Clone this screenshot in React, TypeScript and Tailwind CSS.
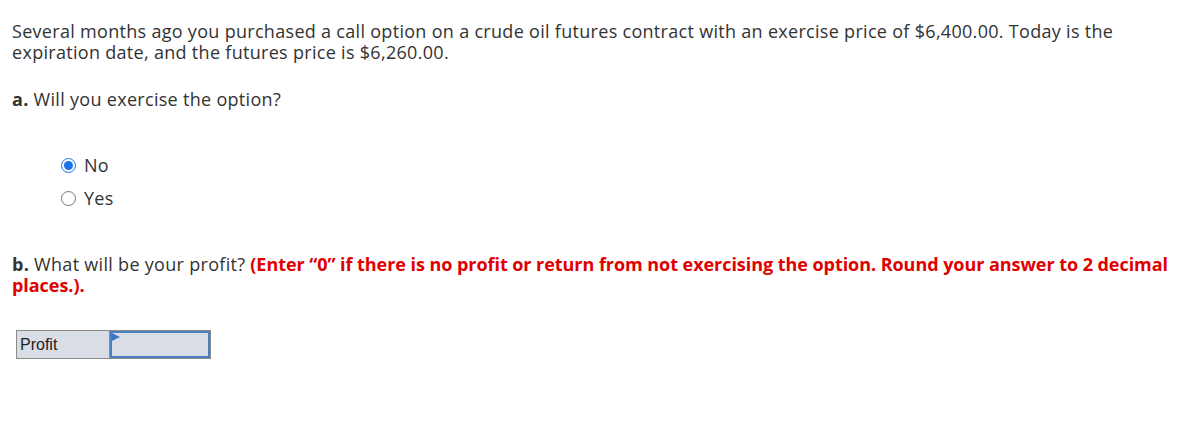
import React, { useState } from "react"

const App: React.FC = () => {
  const [answer, setAnswer] = useState("no")

  return (
    <div
      className="min-h-[435px] w-[1195px] bg-white px-3 pt-[21px] text-[18px] leading-[21px] tracking-[0.3px] text-[#333]"
      style={{ fontFamily: "'Open Sans', sans-serif" }}
    >
      <p>
        Several months ago you purchased a call option on a crude oil futures contract with an exercise price of
        $6,400.00. Today is the expiration date, and the futures price is $6,260.00.
      </p>

      <p className="mt-[26px]">
        <span className="font-bold">a.</span> Will you exercise the option?
      </p>

      <div className="mt-[45px] flex flex-col gap-[12px] pl-[49px]">
        {[
          { id: "no", label: "No" },
          { id: "yes", label: "Yes" },
        ].map((option) => (
          <label key={option.id} className="flex items-center gap-[8px]">
            <input
              type="radio"
              name="exercise"
              checked={answer === option.id}
              onChange={() => setAnswer(option.id)}
              className="m-0 h-[15px] w-[15px] accent-[#1a73e8]"
            />
            <span>{option.label}</span>
          </label>
        ))}
      </div>

      <p className="mt-[45px]">
        <span className="font-bold">b.</span> What will be your profit?{" "}
        <span className="font-bold tracking-[-0.05px] text-[#e00000]">
          (Enter “0” if there is no profit or return from not exercising the option. Round your answer to 2 decimal
          places.).
        </span>
      </p>

      <div className="mt-[34px] ml-[4px] flex h-[29px] w-[195px] border border-[#8a8a8a] bg-[#d9dde6] tracking-normal">
        <div
          className="flex w-[93px] items-center border-r border-[#8a8a8a] pl-[3px] text-[16px] text-[#222]"
          style={{ fontFamily: "'Liberation Sans', Arial, sans-serif" }}
        >
          Profit
        </div>
        <div className="relative flex-1 border-2 border-[#4a7fc0]">
          <svg className="absolute left-0 top-0" width="8" height="8" viewBox="0 0 8 8">
            <polygon points="0,0 8,4 0,8" fill="#3d76c4" />
          </svg>
        </div>
      </div>
    </div>
  )
}

export default App
